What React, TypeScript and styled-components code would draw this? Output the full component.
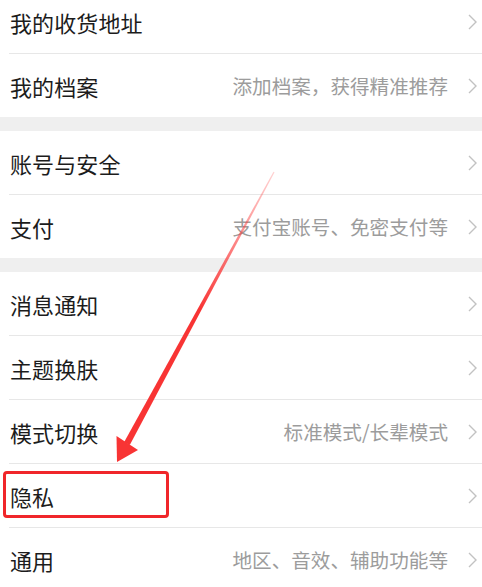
import React from "react";
import styled, { createGlobalStyle } from "styled-components";

const Global = createGlobalStyle`
  html, body { margin: 0; padding: 0; background: #ffffff; }
  body { width: 482px; height: 587px; overflow: hidden; }
  #root { position: relative; }
`;

const Page = styled.div`
  position: relative;
  width: 482px;
  height: 587px;
  overflow: hidden;
  background: #ffffff;
  font-family: "Noto Sans CJK SC", "Noto Sans", sans-serif;
`;

const List = styled.div`
  display: flex;
  flex-direction: column;
  margin-top: -10px;
`;

const Group = styled.div`
  display: flex;
  flex-direction: column;
  background: #ffffff;
`;

const Band = styled.div`
  height: 14px;
  background: #efefef;
  flex: none;
`;

const Divider = styled.div`
  height: 1px;
  margin-left: 9px;
  background: #e7e7e7;
  flex: none;
`;

const Row = styled.div`
  position: relative;
  height: 63px;
  flex: none;
  display: flex;
  align-items: center;
  padding: 0 5px 0 10px;
`;

const Label = styled.span`
  flex: 1;
  font-size: 22px;
  color: #1c1c1c;
  letter-spacing: 0.1px;
  white-space: nowrap;
`;

const Hint = styled.span`
  font-size: 19.6px;
  color: #9c9c9c;
  white-space: nowrap;
  margin-right: 20px;
`;

const Chevron = styled.svg`
  width: 9px;
  height: 16px;
  flex: none;
`;

const Highlight = styled.div`
  position: absolute;
  left: 3px;
  top: 7px;
  width: 166px;
  height: 47px;
  box-sizing: border-box;
  border: 3px solid #f0262a;
  border-radius: 4px;
  pointer-events: none;
`;

const Overlay = styled.svg`
  position: absolute;
  left: 0;
  top: 0;
  width: 482px;
  height: 587px;
  pointer-events: none;
`;

type Item = { label: string; hint?: string; marked?: boolean };

const groups: Item[][] = [
  [{ label: "我的收货地址" }, { label: "我的档案", hint: "添加档案，获得精准推荐" }],
  [{ label: "账号与安全" }, { label: "支付", hint: "支付宝账号、免密支付等" }],
  [
    { label: "消息通知" },
    { label: "主题换肤" },
    { label: "模式切换", hint: "标准模式/长辈模式" },
    { label: "隐私", marked: true },
    { label: "通用", hint: "地区、音效、辅助功能等" },
  ],
];

const Arrow = () => {
  const top = { x: 274, y: 172 };
  const base = { x: 127, y: 443.5 };
  const dx = base.x - top.x;
  const dy = base.y - top.y;
  const len = Math.hypot(dx, dy);
  const nx = dy / len;
  const ny = -dx / len;
  const w0 = 0.6;
  const w1 = 3.2;
  const shaft = [
    [top.x + nx * w0, top.y + ny * w0],
    [base.x + nx * w1, base.y + ny * w1],
    [base.x - nx * w1, base.y - ny * w1],
    [top.x - nx * w0, top.y - ny * w0],
  ]
    .map((p) => p.join(","))
    .join(" ");
  return (
    <Overlay viewBox="0 0 482 587">
      <defs>
        <linearGradient id="fade" x1="274" y1="172" x2="200" y2="310" gradientUnits="userSpaceOnUse">
          <stop offset="0" stopColor="#ff4a4a" stopOpacity="0.25" />
          <stop offset="1" stopColor="#f83434" stopOpacity="1" />
        </linearGradient>
      </defs>
      <polygon points={shaft} fill="url(#fade)" />
      <polygon points="117,462 116.5,436 138,450" fill="#f83434" />
    </Overlay>
  );
};

export default function App() {
  return (
    <Page>
      <Global />
      <List>
        {groups.map((g, gi) => (
          <React.Fragment key={gi}>
            {gi > 0 && <Band />}
            <Group>
              {g.map((it, i) => (
                <React.Fragment key={it.label}>
                  {i > 0 && <Divider />}
                  <Row>
                    <Label>{it.label}</Label>
                    {it.hint && <Hint>{it.hint}</Hint>}
                    <Chevron viewBox="0 0 9 16">
                      <polyline
                        points="1,1 8,8 1,15"
                        fill="none"
                        stroke="#c2c2c2"
                        strokeWidth="1.4"
                        strokeLinejoin="miter"
                      />
                    </Chevron>
                    {it.marked && <Highlight />}
                  </Row>
                </React.Fragment>
              ))}
            </Group>
          </React.Fragment>
        ))}
      </List>
      <Arrow />
    </Page>
  );
}
